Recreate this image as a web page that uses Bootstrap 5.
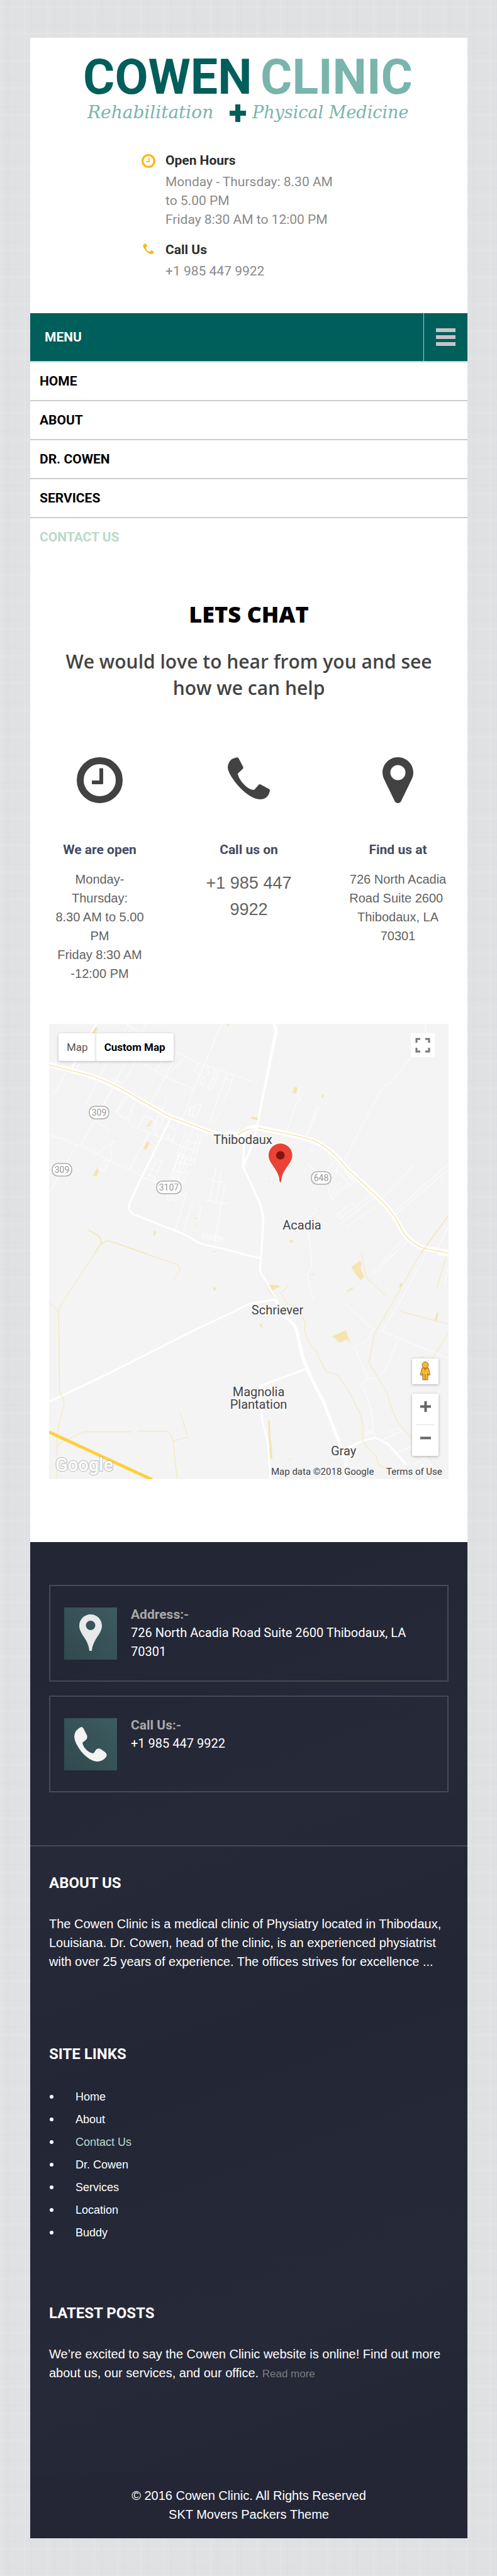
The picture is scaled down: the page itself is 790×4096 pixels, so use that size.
<!DOCTYPE html>
<html lang="en">
<head>
<meta charset="utf-8">
<meta name="viewport" content="width=device-width, initial-scale=1">
<title>Contact Us - Cowen Clinic</title>
<link rel="stylesheet" href="https://cdn.jsdelivr.net/npm/bootstrap@5.3.0/dist/css/bootstrap.min.css">
<style>
body{font-family:"Liberation Sans",Arial,sans-serif;font-size:20px;line-height:30px;color:#636363;padding:60px 47px 62px 48px;
  background-color:#e0e1e3;
  background-image:repeating-linear-gradient(90deg,rgba(255,255,255,.08) 0 3px,transparent 5px 11px,rgba(190,193,198,.08) 13px,transparent 15px 37px),
  repeating-linear-gradient(0deg,rgba(255,255,255,.08) 0 3px,transparent 5px 13px,rgba(190,193,198,.08) 15px,transparent 17px 43px)}
a{text-decoration:none;color:inherit}
svg{display:block}
.rb{font-family:Roboto,sans-serif}
.brand-link svg{width:100%;height:auto}
.head-info{padding:0 0 52px 177px;font-size:21px;color:#8a8a8a}
.head-item{gap:16px}
.head-item+.head-item{margin-top:18px}
.head-item svg{margin-top:5px;flex:none}
.head-item h2{font-size:21px;line-height:30px;color:#2d2d2d;margin-bottom:4px}
.menu-bar{background:#005e5b;color:#fff;font-size:21px;height:76px;padding-left:23px}
.menu-bar button{border:0;border-left:1px solid #a9cbc9;background:none;padding:0 19px;height:76px}
.main-nav a{display:block;height:60px;line-height:60px;padding-left:15px;font-size:21px;font-weight:700;color:#000}
.main-nav li{border-top:2px solid #ccc}
.main-nav .current a{color:#b9dac9}
.chat{padding:73px 30px 100px}
.chat h1{font:800 36px/40px "Open Sans",sans-serif;color:#000;margin-bottom:34px}
.chat .tagline{font:600 30px/42px "Open Sans",sans-serif;color:#444;margin-bottom:89px}
.ways>div{width:161px}
.ways svg{height:73px;margin:0 auto 59px}
.ways h2{font-size:21px;line-height:30px;color:#434b61;margin-bottom:17px}
.ways p{margin:0;white-space:nowrap}
.ways .tel{font-size:27px;line-height:42px}
.map-box{margin-top:65px;position:relative;background:#f4f4f4}
.map-box>svg{width:100%;height:auto}
.map-box button{background:#fff;border:0;padding:0}
.map-types{position:absolute;left:15px;top:15px;font-size:17px}
.map-types button{height:44px;padding:0 13px;color:#555;box-shadow:0 1px 4px rgba(0,0,0,.25);border-radius:2px}
.map-types .picked{color:#000;font-weight:700}
.map-full{position:absolute;right:22px;top:15px;width:38px;height:38px}
.map-tools{position:absolute;right:16px;bottom:37px;width:42px;gap:15px}
.map-tools>*{box-shadow:0 1px 4px rgba(0,0,0,.3);border-radius:2px;background:#fff}
.map-tools button{height:41px;width:42px}
.map-tools .divide{height:1px;background:#e0e0e0;margin:0 6px}
.site-foot{background:#232635 linear-gradient(160deg,transparent 10%,rgba(255,255,255,.014) 30%,transparent 50%,rgba(255,255,255,.014) 75%,transparent 90%);color:#fff}
.reach{padding:68px 30px 84px;border-bottom:2px solid #474953}
.reach-item{height:154px;border:2px solid #474953;padding:31px 22px;gap:22px}
.reach-item+.reach-item{margin-top:22px}
.reach-item svg{flex:none;margin-top:3px}
.reach-item h2{font-size:21px;line-height:28px;color:#a9a9a9;margin:0}
.reach-item p{margin:0}
.foot-cols{padding:43px 30px 142px}
.foot-cols h2{font-size:24px;line-height:30px;margin-bottom:35px}
.foot-cols p{margin:0}
.foot-links{list-style:none;padding:0;margin:0 0 95px;font-size:18px;line-height:36px}
.foot-links li{display:flex;align-items:center;gap:35px;padding-left:1px}
.foot-links li::before{content:"";width:6px;height:6px;border-radius:50%;background:#fff}
.foot-links .current{color:#b9dac9}
.foot-cols .about-text{padding-bottom:117px}
.more{font-size:17px;color:#7c7c80}
.copy{background:#242636;padding:21px 30px 23px}
</style>
</head>
<body>
<svg width="0" height="0" class="position-absolute" aria-hidden="true">
  <symbol id="clock" viewBox="0 0 73 73"><circle cx="36.500" cy="36.500" r="31" fill="none" stroke="currentColor" stroke-width="11"/><path d="M36 18.500q0-1 1-1h4q1 0 1 1V42q0 1-1 1H25q-1 0-1-1v-4q0-1 1-1h11z" fill="currentColor"/></symbol>
  <symbol id="phone" viewBox="0 0 67 67"><path d="M14 .5Q16-.3 17.500 2l7 13.500q.8 1.700-.8 3.200L16 26q1 8 9.500 17T42 52l7-8q1.500-1.500 3.500-.5L65.500 50.500q2 1 1.300 3.500Q64 67 51 67 36 66 18 47 .5 27 0 16 1 2.500 14 .5z" fill="currentColor"/></symbol>
  <symbol id="pin" viewBox="0 0 49 73"><path fill-rule="evenodd" d="M24.500 0C11 0 0 11 0 24.500 0 29 1.500 33 3.500 37L19.500 70q1.700 3 5 3t5-3l16-33c2-4 3.500-8 3.500-12.500C49 11 38 0 24.500 0zm0 12.500a12 12 0 1 1 0 24 12 12 0 0 1 0-24z" fill="currentColor"/></symbol>
  <linearGradient id="tile" x1="0" y1="1" x2="1" y2="0"><stop offset="0" stop-color="#30494f"/><stop offset="1" stop-color="#3d5b60"/></linearGradient>
</svg>

<div class="bg-white">
  <header>
    <a class="brand-link d-block" href="#">
      <svg viewBox="0 0 695 180">
        <g font-family="Roboto, sans-serif" font-weight="700" font-size="77">
          <text x="84" y="89" fill="#005e5b">COWEN</text>
          <text x="366" y="89" fill="#79b5ac">CLINIC</text>
        </g>
        <g font-family="'DejaVu Serif', serif" font-style="italic" fill="#79b5ac">
          <text x="91" y="128" font-size="28">Rehabilitation</text>
          <text x="353" y="128" font-size="27">Physical Medicine</text>
        </g>
        <path d="M326 106h8v10h9v8h-9v10h-8v-10h-9v-8h9z" fill="#005e5b"/>
      </svg>
    </a>
    <div class="head-info rb">
      <div class="head-item d-flex">
        <svg width="22" height="22" color="#fdb813"><use href="#clock"/></svg>
        <div><h2 class="fw-bold">Open Hours</h2>Monday - Thursday: 8.30 AM<br>to 5.00 PM<br>Friday 8:30 AM to 12:00 PM</div>
      </div>
      <div class="head-item d-flex">
        <svg width="22" height="17" color="#fdb813"><use href="#phone"/></svg>
        <div><h2 class="fw-bold">Call Us</h2>+1 985 447 9922</div>
      </div>
    </div>
    <div class="menu-bar rb fw-bold d-flex justify-content-between align-items-center">
      <span>MENU</span>
      <button type="button" aria-label="Toggle menu"><svg width="31" height="28" fill="#c8c4c8"><path d="M0 0h31v6H0zM0 11h31v6H0zM0 22h31v6H0z"/></svg></button>
    </div>
    <nav class="main-nav rb">
      <ul class="list-unstyled m-0">
        <li><a href="#">HOME</a></li>
        <li><a href="#">ABOUT</a></li>
        <li><a href="#">DR. COWEN</a></li>
        <li><a href="#">SERVICES</a></li>
        <li class="current"><a href="#">CONTACT US</a></li>
      </ul>
    </nav>
  </header>

  <main class="chat text-center">
    <h1>LETS CHAT</h1>
    <p class="tagline">We would love to hear from you and see how we can help</p>
    <div class="ways d-flex justify-content-between">
      <div><svg width="73" color="#424242"><use href="#clock"/></svg><h2 class="rb fw-bold">We are open</h2><p>Monday-<br>Thursday:<br>8.30 AM to 5.00<br>PM<br>Friday 8:30 AM<br>-12:00 PM</p></div>
      <div><svg width="67" viewBox="0 0 67 73" color="#424242"><use href="#phone" width="67" height="67"/></svg><h2 class="rb fw-bold">Call us on</h2><p class="tel">+1 985 447<br>9922</p></div>
      <div><svg width="49" color="#424242"><use href="#pin"/></svg><h2 class="rb fw-bold">Find us at</h2><p>726 North Acadia<br>Road Suite 2600&nbsp;<br>Thibodaux, LA<br>70301</p></div>
    </div>

    <div class="map-box rb">
      <svg viewBox="0 0 635 724">
        <style>.r path{vector-effect:non-scaling-stroke;fill:none;stroke:#fff;stroke-linejoin:round}.r .y{stroke:#f5e4b0}.r .f{fill:#f5e4b0;stroke:none}.r .hwy{stroke:#ffcf3e}</style>
        <!-- north-west roads -->
        <g class="r" transform="translate(-18.100 -12.100) scale(.2517)">
          <path stroke-width="1" d="M555 48L655 105L685 48M575 48L540 110M595 70L575 105M835 200L1010 295L1140 335L1367 417M620 275L745 345L860 408L985 458M885 228L715 550M935 252L812 380M715 285L685 310M780 285L745 345M1175 48L1155 60L1025 370L940 580L905 665M1010 295L988 348L1045 378L1062 410L1050 440L1030 430L1035 395L1048 388M1075 297L1073 325L1083 350L1075 378M1120 333L1070 458L1101 466L1147 344M1133 340L1085 460M1095 390L1125 400M1195 362L1088 665L1112 674L1157 598M1237 377L1178 542M1186 397L1225 404M440 282L295 570M560 282L412 563M618 285L537 428L465 392L455 412M272 283L243 333M178 355L108 485M475 455L270 815M565 510L495 610L570 660L585 685L700 735L830 785L930 830M565 510L545 508L490 608M540 548L528 545M520 585L508 580M595 587L598 620L570 660M625 535L555 650M72 750L175 780L245 815L270 815L410 890L580 970L660 1015L765 1055M360 655L450 718M245 815L72 1115M72 935L140 965M495 785L370 868M480 777L455 830L470 885L425 978L400 975L393 945L410 930L432 935L418 965M455 920L408 910M677 628L748 665L725 712L745 722L735 750M677 628L635 705M710 550L797 585L793 568L816 522L808 510M765 620L740 715M798 640L745 750M770 695L810 715M705 735L580 970M820 690L845 700L870 720L895 670M805 745L850 790L870 740M830 740L815 785M935 715L935 735L885 860M960 730L830 1030M985 710L830 1110M995 740L1015 755L965 905M1030 765L985 930M940 790L1030 805M930 830L1015 857M880 860L1000 910M875 880L1000 925M860 920L975 938M945 940L925 985L957 995M890 870L815 1160L830 1167L860 1110M915 880L855 1160L868 1165L935 1005M940 890L880 1070M835 1015L935 1050M850 970L925 990M725 890L785 915L735 1040M755 905L700 1010M695 955L755 980M690 1000L740 1015M945 620L1000 637L1020 600L1032 555L965 575L945 620M965 575L960 625M990 570L978 630M940 1105L935 1132L900 1125M935 1132L868 1352M980 1173L962 1215L918 1372M1037 1190L1014 1295M1127 955L1085 1165M1162 972L1127 1172M1180 1065L1160 1180L1114 1447M1085 1030L1107 1040L1175 1053M1060 1165L1090 1167L1180 1185L1212 1178M1045 1370L1170 1400L1165 1425L1038 1397zM1040 1384L1168 1412"/>
          <path stroke-width="3" d="M370 48L335 110M240 282L215 330M840 645L660 1010L580 1180Q565 1225 605 1250L930 1380L1025 1435L1300 1500M1490 48Q1502 90 1497 115L1385 690L1360 800L1298 950L1398 1170Q1425 1240 1424 1300L1413 1500M1304 740L1298 950"/>
          <path stroke-width="8" d="M72 303L290 363Q450 410 620 515L770 600Q830 637 880 650L1090 733Q1170 760 1275 752C1320 733 1320 700 1385 702L1500 725"/>
          <path class="y" stroke-width="1.500" d="M72 307L290 363Q440 400 620 513L770 600Q830 637 880 650L1120 743Q1200 760 1275 750L1340 715L1385 705L1500 728M320 1350L385 1388Q405 1412 397 1440L360 1500M397 1440L435 1418L465 1424L685 1500M715 655L692 700M724 660L704 698"/>
          <path class="f" d="M365 68L382 75L358 112L342 110zM690 790L708 798L685 844L667 836zM378 956L384 985L370 1015L348 1003zM1350 635L1390 640L1388 656L1350 648zM738 1354L749 1358L740 1386L730 1382zM990 1272L1005 1275L1000 1282L990 1280zM1005 1297L1000 1337L996 1335zM1198 48H1212L1206 63L1199 58zM1107 1482L1124 1484L1119 1492L1106 1488z"/>
        </g>
        <!-- north-east roads -->
        <g class="r" transform="translate(299 -12.100) scale(.2517)">
          <path stroke-width="1" d="M1188 48L1193 108M1100 255L970 422L942 427L880 515L790 690L680 910M400 447L417 455L388 547L372 545L316 722M400 447L378 515L393 520M502 566L517 572L475 680L450 740L435 745M502 566L463 680L435 750M485 625L498 628M485 810L455 862M620 905L560 985M440 933L500 975M500 1065L460 1120M1123 933L918 1150M1332 933L995 1232M1332 970L1005 1248M845 1130L745 1205L690 1248M870 1145L637 1320M900 1185L690 1332M725 1175L745 1205M725 1175L628 1257L650 1282L690 1248L668 1222M665 1270L645 1245M680 975L740 1048L715 1070L650 1000M640 945L600 1010M640 945L740 1050M625 965L690 1035L720 1015M650 1000L625 990L632 965M720 1048L605 1160L577 1120L580 1085L610 1060M567 1162L577 1170L690 1060M567 1162L650 1080M600 1120L600 1100L650 1050M480 1200L505 1225L485 1248L457 1225M432 1350L452 1372L465 1500M1332 1330L1262 1468M1060 1400L960 1500M1080 1420L995 1500"/>
          <path stroke-width="3" d="M230 40Q255 75 247 115L125 690L100 800L38 950L138 1170Q165 1240 164 1300L153 1500M44 740L38 950"/>
          <path stroke-width="8" d="M-60 735Q20 760 50 727C80 700 120 700 140 706L210 722Q340 743 480 787C570 823 640 900 700 970L900 1155Q990 1240 1045 1360Q1110 1450 1195 1468L1332 1490"/>
          <path class="y" stroke-width="1.500" d="M0 750Q55 715 95 713M135 706L210 722Q340 743 480 784C570 820 640 900 700 970L900 1155Q990 1240 1045 1360Q1110 1450 1195 1470L1332 1495M1332 1262L1195 1450L1162 1495"/>
          <path class="f" d="M361 446L382 453L372 490L350 484zM537 495L547 498L542 516L531 513zM90 635L130 640V656L90 648zM330 1415L352 1410L354 1432L332 1427zM194 1040H208L204 1048z"/>
        </g>
        <!-- southern roads -->
        <g class="r" transform="translate(-18.100 365.400) scale(.4334 .2504)">
          <path stroke-width="1" d="M1004 0L1006 85L992 120V180L1013 298M1290 0L1262 45L1270 55L1310 0M1300 0L1228 120L1240 128L1310 0M1424 0L1320 335L1305 370L1262 495M1505 100L1492 190M1130 322L1210 450Q1240 495 1275 500L1505 664M1230 480L1210 545Q1200 570 1160 595L1173 625V650L1213 795L1185 825L1200 870Q1232 1010 1230 1130L1238 1165M1325 540L1270 750L1240 790L1213 795M1230 1120L1200 1140V1155L1230 1135M1260 1185L1332 1130L1325 1105L1293 1130L1308 1145M1316 1268L1372 1220L1350 1240L1358 1250L1375 1232M1380 1340L1425 1290L1430 1300L1385 1400M1395 1310L1410 1350L1452 1315L1448 1330L1400 1428"/>
          <path stroke-width="3" d="M742 0L815 28M1465 0L1505 10M820 0L815 100Q815 120 840 180L872 290L785 315Q765 325 740 350L570 490L250 770L42 940M985 732L818 838V950L826 1080Q845 1180 847 1260L853 1428M1130 1240L1190 1190L1238 1168L1285 1210L1316 1268L1355 1345"/>
          <path stroke-width="5" d="M872 290L900 385L940 450Q955 500 960 570L972 660L1000 780L1048 940L1100 1170L1130 1310V1428"/>
          <path class="y" stroke-width="1" d="M208 0L85 325L77 370L42 308M77 370L80 870L98 945L70 1150V1428M395 0L515 70L523 105L505 145L498 175M1188 0L1198 105L1210 160L1275 265M1404 0L1235 510L1215 690L1280 880Q1300 1010 1325 1080L1390 1210L1490 1400M1496 30L1464 220M1327 355L1340 372L1505 446M1505 510L1446 670L1432 680L1408 653L1395 668L1375 664M912 195L914 215L892 250L912 310L940 340L965 380L980 430V500L995 565L1018 610L1058 750L1100 768L1140 870L1185 1025L1193 1110L1192 1190L1210 1235L1240 1280L1250 1340L1290 1370M838 195L870 290M523 1015L548 1148M72 1225L80 1205L168 1132H345M365 1127H470Q490 1135 497 1190L557 1163M497 1190L511 1428M1378 912H1415L1470 893"/>
          <path class="f" d="M1180 45L1187 55L1185 100L1197 145L1186 168L1168 135L1150 85zM848 197L880 200L891 208L860 235zM1130 487L1140 535L1148 567L1135 545L1107 565L1080 525zM1133 235L1157 212L1158 220L1137 243zM1330 185L1338 190L1330 218L1326 210zM1464 373L1470 378L1464 425L1456 418zM644 214H653V234H644zM815 443L822 445L824 474L814 458zM848 1185L857 1188L861 1305H853zM845 1062H852L854 1185H848zM998 138L1017 124L1007 138zM912 1315L932 1295L925 1307z"/>
          <path class="hwy" stroke-width="5" d="M42 1133L420 1435"/>
        </g>
        <g fill="#fff" stroke="#aaa" stroke-width="1.500"><rect x="64" y="131" width="31" height="20" rx="9"/><rect x="5" y="222" width="31" height="20" rx="9"/><rect x="171" y="250" width="39" height="20" rx="9"/><rect x="417" y="235" width="31" height="20" rx="9"/></g>
        <g font-size="14" fill="#999" text-anchor="middle"><text x="79.500" y="146">309</text><text x="20.500" y="237">309</text><text x="190.500" y="265">3107</text><text x="432.500" y="250">648</text></g>
        <g font-size="20" fill="#444" text-anchor="middle" stroke="#f8f8f8" stroke-width="4" stroke-linejoin="round" paint-order="stroke">
          <text x="308" y="191">Thibodaux</text><text x="402" y="327">Acadia</text><text x="363" y="462">Schriever</text><text x="333" y="592">Magnolia</text><text x="333" y="612">Plantation</text><text x="468" y="686">Gray</text>
        </g>
        <path transform="translate(299 -12.100) scale(.2517)" d="M273 1050C266 1050 268 1030 262 1010C248 960 198 925 198 879A75 75 0 0 1 348 879C348 925 298 960 284 1010C278 1030 280 1050 273 1050z" fill="#ea4335" stroke="#fff" stroke-width="10" paint-order="stroke"/>
        <circle cx="367.700" cy="209" r="6.800" fill="#811411"/>
        <text x="10" y="711" font-size="29" font-weight="500" fill="#fff" stroke="#bbb" stroke-width="2" paint-order="stroke">Google</text>
        <g font-size="15" fill="#444"><text x="353" y="717">Map data ©2018 Google</text><a href="#"><text x="536" y="717">Terms of Use</text></a></g>
      </svg>
      <div class="map-types d-flex"><button type="button">Map</button><button type="button" class="picked">Custom Map</button></div>
      <button type="button" class="map-full" aria-label="Full screen"><svg width="38" height="38" fill="none" stroke="#777" stroke-width="3"><path d="M9 15V9h6M23 9h6v6M29 23v6h-6M15 29H9v-6"/></svg></button>
      <div class="map-tools d-flex flex-column">
        <button type="button" aria-label="Street view"><svg width="42" height="42" viewBox="0 0 42 42" fill="#fbb829" stroke="#80694a"><path d="M16 15h10l2.500 11-2.500 1-1-3v10h-8V24l-1 3-3-1zM21 25v9"/><path d="M17.500 15h7L21 20z" fill="#e8801c" stroke="none"/><circle cx="21" cy="10.500" r="5"/></svg></button>
        <div>
          <button type="button" aria-label="Zoom in"><svg width="42" height="41" stroke="#666" stroke-width="4"><path d="M13 20.500h17M21.500 12v17"/></svg></button>
          <div class="divide"></div>
          <button type="button" aria-label="Zoom out"><svg width="42" height="41" stroke="#666" stroke-width="4"><path d="M13 20.500h17"/></svg></button>
        </div>
      </div>
    </div>
  </main>

  <footer class="site-foot">
    <div class="reach rb">
      <div class="reach-item d-flex align-items-start">
        <svg width="84" height="83" viewBox="0 0 84 83"><path fill="url(#tile)" d="M0 0h84v83H0z"/><path fill="#e8e9ea" fill-rule="evenodd" d="M42 11c-10 0-18 8-18 18 0 8 5 14 10 22 4 7 5.500 12 6 18h4c.5-6 2-11 6-18 5-8 10-14 10-22 0-10-8-18-18-18zm0 10a7.500 7.500 0 1 1 0 15 7.500 7.500 0 0 1 0-15z"/></svg>
        <div><h2 class="fw-bold">Address:-</h2><p>726 North Acadia Road Suite 2600 Thibodaux, LA 70301</p></div>
      </div>
      <div class="reach-item d-flex align-items-start">
        <svg width="84" height="83" viewBox="0 0 84 83"><path fill="url(#tile)" d="M0 0h84v83H0z"/><path fill="#f3f3f3" d="M27 14q3 0 5 5l4 8q2 5-2 8t-5 4q1 6 6 11t11 6q2-1 4-5t8-2l7 5q4 3 2 7-5 8-15 8-12-1-25-16-11-15-11-24 1-11 11-15z"/></svg>
        <div><h2 class="fw-bold">Call Us:-</h2><p>+1 985 447 9922</p></div>
      </div>
    </div>
    <div class="foot-cols">
      <h2 class="rb fw-bold">ABOUT US</h2>
      <p class="about-text">The Cowen Clinic is a medical clinic of Physiatry located in Thibodaux, Louisiana. Dr. Cowen, head of the clinic, is an experienced physiatrist with over 25 years of experience. The offices strives for excellence ...</p>
      <h2 class="rb fw-bold">SITE LINKS</h2>
      <ul class="foot-links">
        <li><a href="#">Home</a></li><li><a href="#">About</a></li><li><a class="current" href="#">Contact Us</a></li><li><a href="#">Dr. Cowen</a></li><li><a href="#">Services</a></li><li><a href="#">Location</a></li><li><a href="#">Buddy</a></li>
      </ul>
      <h2 class="rb fw-bold">LATEST POSTS</h2>
      <p>We’re excited to say the Cowen Clinic website is online! Find out more about us, our services, and our office. <a class="more" href="#">Read more</a></p>
    </div>
    <div class="copy text-center">© 2016 Cowen Clinic. All Rights Reserved<br><a href="#">SKT Movers Packers Theme</a></div>
  </footer>
</div>
<script src="https://cdn.jsdelivr.net/npm/bootstrap@5.3.0/dist/js/bootstrap.bundle.min.js"></script>
</body>
</html>
